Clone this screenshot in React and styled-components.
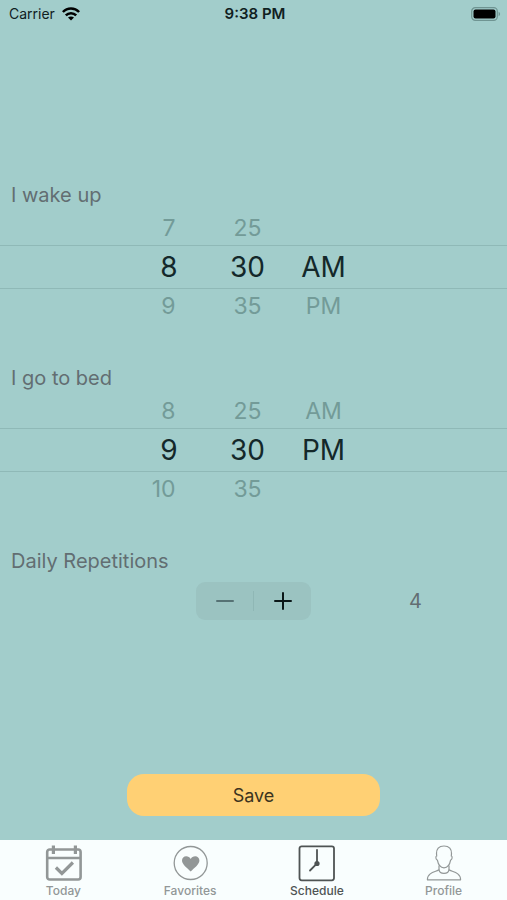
import React, { useState } from 'react'
import styled, { createGlobalStyle } from 'styled-components'

const HOURS = ['1', '2', '3', '4', '5', '6', '7', '8', '9', '10', '11', '12']
const MINUTES = ['00', '05', '10', '15', '20', '25', '30', '35', '40', '45', '50', '55']
const PERIODS = ['AM', 'PM']

function Wheel({ label, options, start, loop, alignRight }) {
    const [index, setIndex] = useState(options.indexOf(start))
    const at = (i) => (loop ? (i + options.length) % options.length : i)
    const prev = options[at(index - 1)]
    const next = options[at(index + 1)]

    return (
        <WheelColumn role="group" aria-label={label} $alignRight={alignRight}>
            {prev ? <WheelStep onClick={() => setIndex(at(index - 1))}>{prev}</WheelStep> : <WheelGap />}
            <WheelValue>{options[index]}</WheelValue>
            {next ? <WheelStep onClick={() => setIndex(at(index + 1))}>{next}</WheelStep> : <WheelGap />}
        </WheelColumn>
    )
}

function TimePicker({ title, hour, minute, period }) {
    return (
        <Section>
            <SectionTitle>{title}</SectionTitle>
            <Picker>
                <PickerBand />
                <Wheels>
                    <Wheel label="Hour" options={HOURS} start={hour} loop alignRight />
                    <Wheel label="Minute" options={MINUTES} start={minute} loop />
                    <Wheel label="AM or PM" options={PERIODS} start={period} />
                </Wheels>
            </Picker>
        </Section>
    )
}

const TABS = [
    {
        name: 'Today',
        icon: (
            <g fill="none" stroke="currentColor" strokeWidth="2.6">
                <rect x="2.2" y="4.5" width="33.4" height="30" rx="2.5" />
                <path d="M2.4 13H35.4" />
                <path d="M8.4 .5V9M30.4 .5V9" strokeWidth="3.2" />
                <path d="M10.9 22.5L16.9 28.5L27.9 17.5" strokeWidth="3.2" />
            </g>
        ),
    },
    {
        name: 'Favorites',
        icon: (
            <g>
                <circle cx="18.7" cy="18" r="16.5" fill="none" stroke="currentColor" strokeWidth="1.3" />
                <path
                    d="M18.7 26.5C15.2 23.2 10 19.4 10 15.6C10 12.9 11.9 11.2 14.2 11.2C16.2 11.2 17.8 12.2 18.7 14C19.6 12.2 21.2 11.2 23.2 11.2C25.5 11.2 27.4 12.9 27.4 15.6C27.4 19.4 22.2 23.2 18.7 26.5Z"
                    fill="currentColor"
                />
            </g>
        ),
    },
    {
        name: 'Schedule',
        active: true,
        icon: (
            <g fill="none" stroke="currentColor" strokeWidth="1.8" strokeLinecap="round">
                <rect x="1.5" y="1.3" width="34.5" height="34" rx="2.2" />
                <path d="M19 4.8V18.5L12 25.5" strokeWidth="1.8" />
                <circle cx="19" cy="18.5" r="2.6" fill="currentColor" stroke="none" />
            </g>
        ),
    },
    {
        name: 'Profile',
        icon: (
            <g fill="none" stroke="currentColor" strokeWidth="1.2" strokeLinejoin="round">
                <path d="M19 1C13.6 1 11.4 4.4 11.5 8.6L11.7 11C10.4 11.2 10.7 14.8 12.4 15.2C13.2 19.6 15.8 22.8 19 22.8C22.2 22.8 24.8 19.6 25.6 15.2C27.3 14.8 27.6 11.2 26.3 11L26.5 8.6C26.6 4.4 24.4 1 19 1Z" />
                <path d="M14 20.6V24.6C12.5 26.8 2.4 26.6 2.4 34.8H35.6C35.6 26.6 25.5 26.8 24 24.6V20.6" />
                <path d="M14 24.6C14.6 29.6 23.4 29.6 24 24.6" />
            </g>
        ),
    },
]

function App() {
    const [count, setCount] = useState(4)

    return (
        <Screen>
            <GlobalStyle />
            <StatusBar>
                <Carrier>
                    Carrier
                    <svg width="18" height="14" viewBox="0 0 18 14" aria-hidden="true">
                        <g fill="none" stroke="currentColor" strokeWidth="2.5">
                            <path d="M.9 5C5.3 .4 12.7 .4 17.1 5" />
                            <path d="M3.8 8.3C6.6 5.4 11.4 5.4 14.2 8.3" />
                        </g>
                        <path d="M6 10.6C7.7 9 10.3 9 12 10.6L9 13.6Z" fill="currentColor" />
                    </svg>
                </Carrier>
                <Clock>9:38 PM</Clock>
                <Battery width="30" height="14" viewBox="0 0 30 14" aria-hidden="true">
                    <rect x=".7" y=".7" width="25.6" height="12.6" rx="3.6" fill="none" stroke="#6f9492" strokeWidth="1.2" />
                    <rect x="2.5" y="2.5" width="22" height="9" rx="2" fill="#000" />
                    <path d="M27.6 4.8C29.6 5.6 29.6 8.4 27.6 9.2Z" fill="#6f9492" />
                </Battery>
            </StatusBar>

            <Content>
                <TimePicker title="I wake up" hour="8" minute="30" period="AM" />
                <TimePicker title="I go to bed" hour="9" minute="30" period="PM" />

                <Section>
                    <SectionTitle>Daily Repetitions</SectionTitle>
                    <Repetitions>
                        <Stepper>
                            <StepButton $muted aria-label="Decrease" onClick={() => setCount(Math.max(0, count - 1))}>
                                <svg width="18" height="18" viewBox="0 0 18 18">
                                    <path d="M1 9H17" stroke="currentColor" strokeWidth="2" strokeLinecap="round" />
                                </svg>
                            </StepButton>
                            <Divider />
                            <StepButton aria-label="Increase" onClick={() => setCount(count + 1)}>
                                <svg width="18" height="18" viewBox="0 0 18 18">
                                    <path d="M1 9H17M9 1V17" stroke="currentColor" strokeWidth="2" strokeLinecap="round" />
                                </svg>
                            </StepButton>
                        </Stepper>
                        <Count>{count}</Count>
                    </Repetitions>
                </Section>

                <SaveButton>Save</SaveButton>
            </Content>

            <TabBar>
                {TABS.map((tab) => (
                    <Tab key={tab.name} href={'#' + tab.name.toLowerCase()} $active={tab.active}>
                        <svg width="37" height="37" viewBox="0 0 37 37" aria-hidden="true">
                            {tab.icon}
                        </svg>
                        {tab.name}
                    </Tab>
                ))}
            </TabBar>
        </Screen>
    )
}

export default App

const GlobalStyle = createGlobalStyle`
    * {
        box-sizing: border-box;
    }
    body {
        margin: 0;
        font-family: Inter, 'Liberation Sans', sans-serif;
    }
    button {
        font-family: inherit;
        border: none;
        background: none;
        padding: 0;
        cursor: pointer;
    }
`

const Screen = styled.div`
    min-height: 100vh;
    display: flex;
    flex-direction: column;
    background-color: #a2cdcb;
`

const StatusBar = styled.header`
    height: 27px;
    padding: 0 6px 0 9px;
    display: grid;
    grid-template-columns: 1fr auto 1fr;
    align-items: center;
    font-size: 14px;
    color: #10201f;
`

const Carrier = styled.div`
    display: flex;
    align-items: center;
    gap: 7px;

    svg {
        color: #000;
    }
`

const Clock = styled.div`
    font-size: 15px;
    font-weight: 600;
`

const Battery = styled.svg`
    justify-self: end;
`

const Content = styled.main`
    flex: 1;
    display: flex;
    flex-direction: column;
    gap: 43px;
    padding: 156px 0 24px;
`

const Section = styled.section`
    display: flex;
    flex-direction: column;
`

const SectionTitle = styled.h2`
    margin: 0;
    padding-left: 11px;
    font-size: 20px;
    font-weight: 400;
    line-height: 24px;
    color: #626e72;
`

/* band and wheels share one grid cell so the lines run behind the numbers */
const Picker = styled.div`
    display: grid;
    margin-top: 4px;

    > * {
        grid-area: 1 / 1;
    }
`

const PickerBand = styled.div`
    align-self: center;
    height: 44px;
    border-top: 1px solid #8fb9b7;
    border-bottom: 1px solid #8fb9b7;
`

const Wheels = styled.div`
    display: grid;
    grid-template-columns: repeat(3, 76px);
    justify-content: center;
    padding-right: 12px;
`

const WheelStep = styled.button`
    height: 34px;
    font-size: 23px;
    line-height: 34px;
    color: #739b98;
`

const WheelColumn = styled.div`
    display: flex;
    flex-direction: column;
    align-items: ${(props) => (props.$alignRight ? 'flex-end' : 'center')};
    padding-right: ${(props) => (props.$alignRight ? '32px' : '0')};

    ${WheelStep} {
        padding-right: ${(props) => (props.$alignRight ? '2px' : '0')};
    }
`

const WheelGap = styled.div`
    height: 34px;
`

const WheelValue = styled.div`
    font-size: 28px;
    line-height: 44px;
    color: #14282a;
`

const Repetitions = styled.div`
    display: grid;
    grid-template-columns: 1fr auto 1fr;
    align-items: center;
    margin-top: 9px;
`

const Stepper = styled.div`
    grid-column: 2;
    display: flex;
    align-items: center;
    height: 38px;
    border-radius: 9px;
    background-color: #9bc3c1;
`

const StepButton = styled.button`
    width: 57px;
    height: 38px;
    display: flex;
    align-items: center;
    justify-content: center;
    color: ${(props) => (props.$muted ? '#567274' : '#0b1718')};
`

const Divider = styled.div`
    width: 1px;
    height: 20px;
    background-color: #8fb7b5;
`

const Count = styled.output`
    padding-left: 50%;
    font-size: 20px;
    line-height: 24px;
    color: #626e72;
`

const SaveButton = styled.button`
    width: 50%;
    height: 42px;
    margin: auto auto 0;
    border-radius: 17px;
    background-color: #ffd074;
    color: #3c3420;
    font-size: 18px;
`

const TabBar = styled.nav`
    display: grid;
    grid-template-columns: repeat(4, 1fr);
    height: 60px;
    padding-top: 5px;
    background-color: #f9fefe;
`

const Tab = styled.a`
    display: flex;
    flex-direction: column;
    align-items: center;
    gap: 1px;
    font-size: 12px;
    font-weight: 500;
    line-height: 16px;
    text-decoration: none;
    color: ${(props) => (props.$active ? '#4f5454' : '#929797')};
`
